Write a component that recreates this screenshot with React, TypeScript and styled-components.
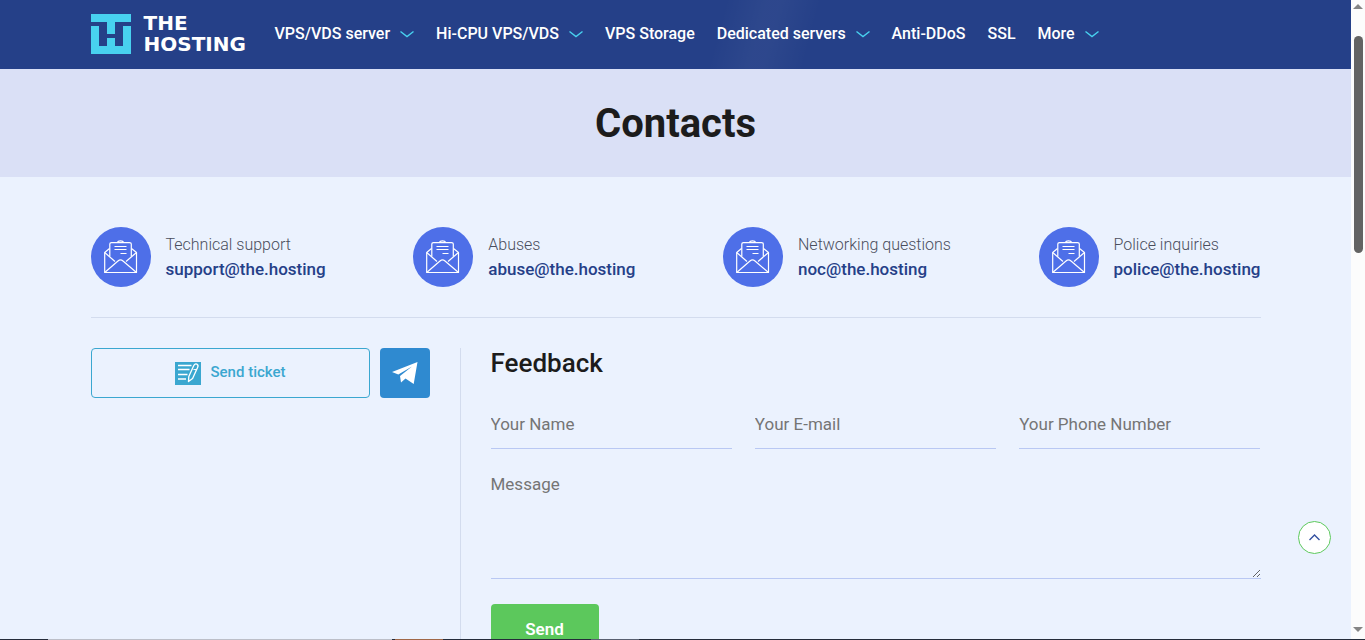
import React from "react";
import styled, { createGlobalStyle } from "styled-components";

const Global = createGlobalStyle`
  *, *::before, *::after { box-sizing: border-box; }
  body { margin: 0; background: #ebf2fe; font-family: Roboto, "Liberation Sans", sans-serif; color: #1c1c1c; }
  a { text-decoration: none; color: inherit; }
  button { font-family: inherit; cursor: pointer; }
`;

const Shell = styled.div`
  display: flex;
  height: 100vh;
  overflow: hidden;
`;

const Page = styled.div`
  flex: 1;
  min-width: 0;
`;

const Container = styled.div`
  width: 100%;
  max-width: 1170px;
  margin: 0 auto;
`;

const Header = styled.header`
  background: linear-gradient(105deg, transparent 53%, rgba(255, 255, 255, 0.04) 56%, rgba(255, 255, 255, 0.04) 57%, transparent 60%), #254088;
`;

const HeaderRow = styled(Container)`
  display: flex;
  align-items: center;
  height: 69px;
  padding-bottom: 2px;
`;

const Logo = styled.a`
  display: flex;
  align-items: center;
  gap: 13px;
  width: 184px;
  flex-shrink: 0;
`;

const LogoText = styled.span`
  font: 700 20px/21px "DejaVu Sans", sans-serif;
  color: #fff;
`;

const Nav = styled.nav`
  display: flex;
  gap: 22px;
`;

const NavLink = styled.a`
  display: flex;
  align-items: center;
  gap: 10px;
  font-size: 16px;
  line-height: 24px;
  font-weight: 500;
  color: #fff;
  white-space: nowrap;
`;

const TitleBand = styled.div`
  display: flex;
  align-items: center;
  justify-content: center;
  height: 108px;
  padding-top: 2px;
  background: #dae0f6;
`;

const Title = styled.h1`
  margin: 0;
  font-size: 40px;
  line-height: 48px;
  font-weight: 700;
`;

const Contacts = styled.div`
  display: flex;
  justify-content: space-between;
  margin-top: 50px;
  padding-bottom: 30px;
  border-bottom: 1px solid #d3dcee;
`;

const Contact = styled.div`
  display: flex;
  align-items: center;
  gap: 15px;
`;

const Round = styled.span`
  display: grid;
  place-items: center;
  width: 60px;
  height: 60px;
  border-radius: 50%;
  background: #4e6fe8;
`;

const ContactLabel = styled.div`
  font-size: 16px;
  line-height: 25px;
  font-weight: 300;
  color: #4a4e5c;
`;

const ContactMail = styled.a`
  display: block;
  font-size: 17px;
  line-height: 25px;
  font-weight: 500;
  color: #254088;
`;

const Columns = styled.div`
  display: grid;
  grid-template-columns: 370px 1fr;
  margin-top: 30px;
`;

const Actions = styled.div`
  display: flex;
  align-items: flex-start;
  gap: 10px;
  padding-right: 30px;
  border-right: 1px solid #d3dcee;
`;

const TicketLink = styled.a`
  display: flex;
  flex: 1;
  align-items: center;
  justify-content: center;
  gap: 10px;
  height: 50px;
  border: 1px solid #3ba7d0;
  border-radius: 4px;
  font-size: 15px;
  font-weight: 500;
  color: #3ba7d0;
`;

const TicketText = styled.span`
  padding-bottom: 2px;
`;

const TelegramLink = styled.a`
  display: grid;
  place-items: center;
  width: 50px;
  height: 50px;
  border-radius: 4px;
  background: #2f8ad0;
`;

const Form = styled.form`
  padding-left: 30px;
`;

const FormTitle = styled.h2`
  margin: 0 0 22px;
  font-size: 26px;
  line-height: 30px;
  font-weight: 500;
`;

const Fields = styled.div`
  display: grid;
  grid-template-columns: repeat(3, 1fr);
  gap: 23px;
`;

const Input = styled.input`
  width: 100%;
  height: 49px;
  padding: 0;
  border: 0;
  border-bottom: 1px solid #b9c8f3;
  outline: 0;
  background: transparent;
  font: 400 17px/20px Roboto, sans-serif;
  &::placeholder { color: #757575; }
`;

const Message = styled.textarea`
  display: block;
  width: 100%;
  height: 115px;
  margin-top: 15px;
  padding: 10px 0;
  border: 0;
  border-bottom: 1px solid #b9c8f3;
  outline: 0;
  background: transparent;
  font: 400 17px/20px Roboto, sans-serif;
  resize: vertical;
  &::placeholder { color: #757575; }
`;

const Send = styled.button`
  width: 108px;
  height: 50px;
  margin-top: 25px;
  padding: 0;
  border: 0;
  border-radius: 4px;
  background: #5cc85c;
  color: #fff;
  font-size: 17px;
  font-weight: 600;
`;

const ToTop = styled.button`
  position: fixed;
  right: 34px;
  bottom: 86px;
  display: grid;
  place-items: center;
  width: 33px;
  height: 33px;
  padding: 0;
  border: 1px solid #5cc85c;
  border-radius: 50%;
  background: #fff;
`;

const Rail = styled.div`
  display: flex;
  flex-direction: column;
  align-items: center;
  width: 14px;
  padding: 4px 0 8px;
  background: #fcfcfc;
`;

const Thumb = styled.div`
  width: 9px;
  height: 217px;
  margin: 27px 0 auto;
  border-radius: 5px;
  background: #636363;
`;

const Taskbar = styled.div`
  position: fixed;
  left: 0;
  right: 0;
  bottom: 0;
  height: 1px;
  background: linear-gradient(90deg, #252c3a 48px, #bcbfc8 48px, #bcbfc8 392px, #252c3a 392px, #252c3a 395px, #a06848 395px, #a06848 443px, #252c3a 443px, #252c3a 591px, #596070 591px, #596070 639px, #252c3a 639px);
`;

const navItems = [
  { label: "VPS/VDS server", menu: true },
  { label: "Hi-CPU VPS/VDS", menu: true },
  { label: "VPS Storage", menu: false },
  { label: "Dedicated servers", menu: true },
  { label: "Anti-DDoS", menu: false },
  { label: "SSL", menu: false },
  { label: "More", menu: true },
];

const contacts = [
  { label: "Technical support", mail: "support@the.hosting" },
  { label: "Abuses", mail: "abuse@the.hosting" },
  { label: "Networking questions", mail: "noc@the.hosting" },
  { label: "Police inquiries", mail: "police@the.hosting" },
];

const LogoMark = () => (
  <svg width="40" height="40" viewBox="0 0 40 40" fill="#48d1ef" aria-hidden="true">
    <path d="M0 0H40V8H24V20H16V8H0Z" />
    <path d="M0 12H8V32H16V24H24V32H32V12H40V40H0Z" />
  </svg>
);

const Chevron = () => (
  <svg width="14" height="8" viewBox="0 0 14 8" fill="none" stroke="#48d1ef" strokeWidth="1.4" aria-hidden="true">
    <path d="M.5 1.5 7 6.5 13.5 1.5" />
  </svg>
);

const Envelope = () => (
  <svg width="34" height="34" viewBox="0 0 34 34" fill="none" stroke="#fff" strokeWidth="1.2" strokeLinejoin="round" aria-hidden="true">
    <path d="M5.500 8.500 .7 12.500V32.500H32.500V12.500L27.500 8.500" />
    <path d="M.7 12.500 11 21.500M32.500 12.500 22 21.500M.7 32.500 14 21C16 19.300 17 19.300 19 21L32.500 32.500" />
    <path d="M5.800 16.500V4C5.800 3 6.500 2.600 7.500 2.600H25.500C26.500 2.600 27.300 3 27.300 4V16.500M13.500 2.600C14 .2 19 .2 19.500 2.600" />
    <path d="M10.500 6.500H22.500M10.500 9.500H22.500M16.500 13.500H22.500" />
  </svg>
);

const Ticket = () => (
  <svg width="26" height="23" viewBox="0 0 26 23" fill="none" aria-hidden="true">
    <path d="M0 0H26V23H0Z" fill="#3ba7d0" />
    <path d="M3 3.500H16.500M3 7.500H14.500M3 12.500H12.500M3 17H11" stroke="#fff" strokeWidth="1.4" />
    <path d="M13.500 19.500 13.800 14.500 18.800 3.500C19.500 2 20.800 1.700 21.800 2.200C23 2.800 23.300 4 22.700 5.300L17.600 16.500ZM17.500 6.300 21.300 8" stroke="#fff" strokeWidth="1.3" strokeLinejoin="round" />
  </svg>
);

const Plane = () => (
  <svg width="26" height="22" viewBox="0 0 26 22" fill="#fff" aria-hidden="true">
    <path d="M25.500 0 0 10 6.300 12.600 20 4.500 8 14 9 20.500 13.500 16.500 21.700 22Z" />
  </svg>
);

export default function App() {
  return (
    <>
      <Global />
      <Shell>
        <Page>
          <Header>
            <HeaderRow>
              <Logo href="#">
                <LogoMark />
                <LogoText>THE<br />HOSTING</LogoText>
              </Logo>
              <Nav>
                {navItems.map((item) => (
                  <NavLink href="#" key={item.label}>
                    {item.label}
                    {item.menu && <Chevron />}
                  </NavLink>
                ))}
              </Nav>
            </HeaderRow>
          </Header>
          <TitleBand><Title>Contacts</Title></TitleBand>
          <Container as="main">
            <Contacts>
              {contacts.map((c) => (
                <Contact key={c.mail}>
                  <Round><Envelope /></Round>
                  <div>
                    <ContactLabel>{c.label}</ContactLabel>
                    <ContactMail href={`mailto:${c.mail}`}>{c.mail}</ContactMail>
                  </div>
                </Contact>
              ))}
            </Contacts>
            <Columns>
              <Actions>
                <TicketLink href="#"><Ticket /><TicketText>Send ticket</TicketText></TicketLink>
                <TelegramLink href="#" aria-label="Telegram"><Plane /></TelegramLink>
              </Actions>
              <Form>
                <FormTitle>Feedback</FormTitle>
                <Fields>
                  <Input type="text" placeholder="Your Name" aria-label="Your Name" />
                  <Input type="email" placeholder="Your E-mail" aria-label="Your E-mail" />
                  <Input type="tel" placeholder="Your Phone Number" aria-label="Your Phone Number" />
                </Fields>
                <Message placeholder="Message" aria-label="Message" />
                <Send type="button">Send</Send>
              </Form>
            </Columns>
          </Container>
        </Page>
        <Rail aria-hidden="true">
          <svg width="10" height="5" viewBox="0 0 10 5" fill="#858585"><path d="M5 0 10 5H0Z" /></svg>
          <Thumb />
          <svg width="10" height="5" viewBox="0 0 10 5" fill="#858585"><path d="M0 0H10L5 5Z" /></svg>
        </Rail>
      </Shell>
      <ToTop type="button" aria-label="Back to top">
        <svg width="13" height="9" viewBox="0 0 13 9" fill="none" stroke="#3450a0" strokeWidth="1.4"><path d="M1.500 7 6.500 2 11.500 7" /></svg>
      </ToTop>
      <Taskbar />
    </>
  );
}
